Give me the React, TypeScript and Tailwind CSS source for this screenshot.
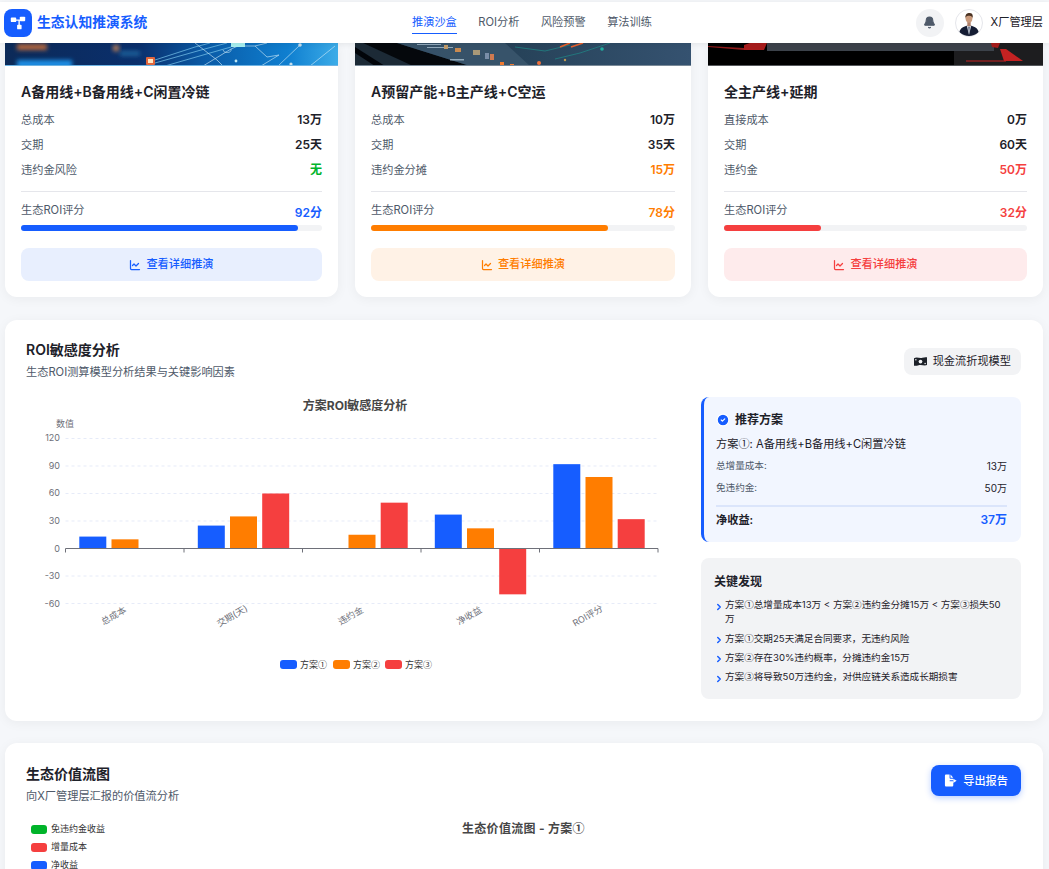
import { Bell, ChevronRight, CircleCheck, ChartLine } from "lucide-react";

const font = { fontFamily: 'Inter, "Noto Sans CJK SC", sans-serif' };

// Inter has its own wide circled digits, the reference uses the CJK ones
function circled(text: string) {
  return text.split(/([①②③])/).map((part, i) =>
    /[①②③]/.test(part) ? (
      <span key={i} className="font-['Noto_Sans_CJK_SC'] leading-none">{part}</span>
    ) : (
      part
    )
  );
}

const plans = [
  {
    title: "A备用线+B备用线+C闲置冷链",
    rows: [["总成本", "13万"], ["交期", "25天"], ["违约金风险", "无"]],
    score: 92,
    accent: "text-[#00b42a]",
    scoreText: "text-[#165dff]",
    bar: "bg-[#165dff]",
    btn: "bg-[#e8effe] text-[#165dff]",
    art: "blue",
  },
  {
    title: "A预留产能+B主产线+C空运",
    rows: [["总成本", "10万"], ["交期", "35天"], ["违约金分摊", "15万"]],
    score: 78,
    accent: "text-[#ff7d00]",
    scoreText: "text-[#ff7d00]",
    bar: "bg-[#ff7d00]",
    btn: "bg-[#fff2e6] text-[#ff7d00]",
    art: "slate",
  },
  {
    title: "全主产线+延期",
    rows: [["直接成本", "0万"], ["交期", "60天"], ["违约金", "50万"]],
    score: 32,
    accent: "text-[#f53f3f]",
    scoreText: "text-[#f53f3f]",
    bar: "bg-[#f53f3f]",
    btn: "bg-[#feebec] text-[#f53f3f]",
    art: "black",
  },
];

function CardArt({ kind }: { kind: string }) {
  if (kind === "blue") {
    return (
      <svg viewBox="0 0 333 23" preserveAspectRatio="none" className="block h-[23px] w-full">
        <defs>
          <linearGradient id="blueArt" x1="0" x2="1" y1="0" y2="0">
            <stop offset="0" stopColor="#0c2a58" />
            <stop offset="0.4" stopColor="#0a2f6c" />
            <stop offset="0.6" stopColor="#0a5aa6" />
            <stop offset="0.85" stopColor="#0f7fd0" />
            <stop offset="1" stopColor="#3cace8" />
          </linearGradient>
          <filter id="soft" x="-30%" y="-100%" width="160%" height="300%">
            <feGaussianBlur stdDeviation="2" />
          </filter>
        </defs>
        <rect width="333" height="23" fill="url(#blueArt)" />
        <rect x="12" y="1" width="30" height="6" fill="#b8683c" filter="url(#soft)" />
        <rect x="12" y="17" width="55" height="8" fill="#1a8ee4" filter="url(#soft)" />
        <rect x="115" y="8" width="20" height="5" fill="#1a5f98" filter="url(#soft)" />
        <circle cx="111" cy="5" r="3.5" fill="#b07a58" filter="url(#soft)" />
        <g stroke="#7cc8ee" strokeWidth="0.7" fill="none">
          <path d="M150 17 L190 4 L205 0" />
          <path d="M150 20 L196 7 L222 0" />
          <path d="M160 23 L205 10 L226 4" />
        </g>
        <g stroke="#cfeaf8" strokeWidth="0.7" fill="none" opacity="0.9">
          <path d="M190 0 L212 17 L218 23" />
          <path d="M198 23 L226 6 L240 0" />
          <path d="M250 3 L262 14 L274 12 L256 23" />
          <path d="M273 23 L295 2" />
          <path d="M232 3 L250 3 L262 0" />
          <path d="M305 23 L330 3" />
          <path d="M218 7 a4 3 0 1 0 8 -1" />
        </g>
        <rect x="226" y="0" width="14" height="4" fill="#a8f0f0" />
        <circle cx="295" cy="2" r="1.8" fill="#c4dcec" />
        <circle cx="286" cy="21" r="1.6" fill="#c4dcec" />
        <circle cx="231" cy="18" r="1.4" fill="#bfe8f4" />
        <rect x="141" y="14" width="9" height="8" rx="1" fill="#e0653c" />
        <rect x="143" y="16" width="5" height="4" fill="#ffe6c4" />
        <rect y="22" width="333" height="1" fill="#6fb4e4" />
      </svg>
    );
  }
  if (kind === "slate") {
    return (
      <svg viewBox="0 0 336 23" preserveAspectRatio="none" className="block h-[23px] w-full">
        <defs>
          <linearGradient id="slateArt" x1="0" x2="1" y1="0" y2="0">
            <stop offset="0" stopColor="#1f3446" />
            <stop offset="0.5" stopColor="#27435a" />
            <stop offset="1" stopColor="#355270" />
          </linearGradient>
        </defs>
        <rect width="336" height="23" fill="url(#slateArt)" />
        <path d="M0 0 L8 0 L60 23 L0 23 Z" fill="#1c2a36" />
        <path d="M8 0 L42 0 L115 23 L58 23 Z" fill="#05080c" />
        <path d="M0 4 L30 23 L20 23 L0 10 Z" fill="#02050a" />
        <path d="M42 0 L150 0 L175 23 L115 23 Z" fill="#3d5a70" opacity="0.75" />
        <g fill="#a9c0d0" opacity="0.8">
          <rect x="62" y="1" width="24" height="1" />
          <rect x="72" y="4" width="26" height="1" />
          <rect x="95" y="16" width="14" height="1.5" />
        </g>
        <g>
          <rect x="89" y="2" width="4" height="4" fill="#c09a68" />
          <rect x="100" y="5" width="6" height="4" fill="#c98a50" />
          <rect x="118" y="7" width="7" height="5" fill="#a89878" />
          <rect x="130" y="10" width="4" height="6" fill="#7a8ea8" />
          <rect x="135" y="11" width="4" height="6" fill="#d07a50" />
          <rect x="145" y="19" width="4" height="3" fill="#f07a30" />
          <rect x="155" y="21" width="4" height="2" fill="#f07a30" />
        </g>
        <g stroke="#1f8a88" strokeWidth="1" fill="none" opacity="0.7">
          <path d="M160 4 L190 8 L215 2" />
          <path d="M200 16 L225 10 L255 0" />
        </g>
        <path d="M205 4 L215 0 M216 4 L228 0" stroke="#e8602c" strokeWidth="1.6" />
        <circle cx="184" cy="20" r="2" fill="#f0703a" />
        <circle cx="247" cy="6" r="1.8" fill="#1fb0a0" />
        <circle cx="210" cy="17" r="1.2" fill="#c09a50" />
        <rect y="22" width="336" height="1" fill="#7a8a98" />
      </svg>
    );
  }
  return (
    <svg viewBox="0 0 335 23" preserveAspectRatio="none" className="block h-[23px] w-full">
      <rect width="335" height="23" fill="#000" />
      <rect x="59" y="0" width="227" height="8" fill="#3c424a" />
      <rect x="246" y="8" width="89" height="15" fill="#1d1d1f" />
      <rect x="286" y="0" width="49" height="8" fill="#1d1d1f" />
      <path d="M0 3 L36 5 L36 7 L0 4 Z" fill="#8e1a1a" />
      <path d="M36 2 L42 0 L59 0 L56 7 L36 7 Z" fill="#a81c1c" />
      <path d="M283 0 L292 0 L290 5 L284 4 Z" fill="#a81c1c" />
      <path d="M292 6 L298 6 L315 18 L296 18 Z" fill="#c42222" />
      <path d="M258 17.5 H298 V18.5 H258 Z" fill="#c42222" />
      <rect y="22" width="335" height="1" fill="#55585c" />
    </svg>
  );
}

function PlanCard({ plan }: { plan: (typeof plans)[number] }) {
  return (
    <div className="overflow-hidden rounded-b-xl bg-white shadow-[0_2px_12px_rgba(0,0,0,0.05)]">
      <CardArt kind={plan.art} />
      <div className="px-4 pt-4 pb-4">
        <h3 className="text-[14px] leading-5 font-semibold text-[#1d2129]">{plan.title}</h3>
        <div className="mt-[8px] flex flex-col gap-[5px]">
          {plan.rows.map(([k, v], i) => (
            <div key={k} className="flex h-5 items-center justify-between text-[11.2px]">
              <span className="text-[#4e5969]">{k}</span>
              <span className={`text-[12px] font-semibold ${i === 2 ? plan.accent : "text-[#1d2129]"}`}>{v}</span>
            </div>
          ))}
        </div>
        <div className="mt-[11px] border-t border-[#e5e6eb] pt-[10px]">
          <div className="flex items-start justify-between text-[11.2px] leading-4">
            <span className="text-[#4e5969]">生态ROI评分</span>
            <span className={`mt-[3px] text-[12px] font-semibold ${plan.scoreText}`}>{plan.score}分</span>
          </div>
          <div className="mt-[4px] h-[6px] rounded-full bg-[#f2f3f5]">
            <div className={`h-full rounded-full ${plan.bar}`} style={{ width: `${plan.score}%` }} />
          </div>
        </div>
        <div className={`mt-[17px] flex h-[33px] items-center justify-center gap-[5px] rounded-lg text-[11.2px] font-medium ${plan.btn}`}>
          <ChartLine size={12} strokeWidth={2.5} />
          <span>查看详细推演</span>
        </div>
      </div>
    </div>
  );
}

const series = [
  { color: "#165dff", values: [13, 25, 0, 37, 92], offset: 13.8 },
  { color: "#ff7d00", values: [10, 35, 15, 22, 78], offset: 46 },
  { color: "#f53f3f", values: [0, 60, 50, -50, 32], offset: 78.2 },
];
const cats = ["总成本", "交期(天)", "违约金", "净收益", "ROI评分"];
const ticks = [120, 90, 60, 30, 0, -30, -60];
// the svg sits at page x=26, y=395
const zero = 153.5;
const unit = 0.9167;
const x0 = 39.5;
const band = 118.5;

function RoiChart() {
  return (
    <svg width="654" height="285" viewBox="0 0 654 285" className="block" style={font}>
      <text x="329" y="15" textAnchor="middle" fontSize="12" fontWeight="700" fill="#464646">方案ROI敏感度分析</text>
      <text x="39" y="32" textAnchor="middle" fontSize="9" fill="#6e7079">数值</text>
      {ticks.map((t) => {
        const y = zero - t * unit;
        return (
          <g key={t}>
            {t !== 0 && <line x1={x0} x2={x0 + band * 5} y1={y} y2={y} stroke="#e6ebf8" strokeDasharray="3 3" />}
            <text x="34" y={y + 3} textAnchor="end" fontSize="9" fill="#6e7079">{t}</text>
          </g>
        );
      })}
      {series.map((s) =>
        s.values.map((v, i) => {
          if (v === 0) return null;
          const h = Math.abs(v) * unit;
          return <rect key={s.color + i} x={x0 + band * i + s.offset} y={v > 0 ? zero - h : zero} width="27" height={h} fill={s.color} />;
        })
      )}
      <line x1={x0} x2={x0 + band * 5} y1={zero} y2={zero} stroke="#6e7079" />
      {[0, 1, 2, 3, 4, 5].map((i) => (
        <line key={i} x1={x0 + band * i} x2={x0 + band * i} y1={zero} y2={zero + 4} stroke="#6e7079" />
      ))}
      {cats.map((c, i) => {
        const cx = x0 + band * i + band / 2 - 11;
        return (
          <text key={c} x={cx} y="224" textAnchor="middle" fontSize="9" fill="#6e7079" transform={`rotate(-30 ${cx} 221)`}>{c}</text>
        );
      })}
      {[
        [254, "#165dff", "方案①"],
        [307, "#ff7d00", "方案②"],
        [359, "#f53f3f", "方案③"],
      ].map(([x, color, label]) => (
        <g key={label as string}>
          <rect x={x as number} y="265" width="17" height="9" rx="3" fill={color as string} />
          <text x={(x as number) + 20} y="273" fontSize="9" fill="#333" fontFamily='"Noto Sans CJK SC", sans-serif'>{label}</text>
        </g>
      ))}
    </svg>
  );
}

function Avatar() {
  return (
    <svg viewBox="0 0 28 28" className="h-[28px] w-[28px] rounded-full border border-[#e5e6eb] bg-white">
      <path d="M3 28 C3 20 7 18 14 16.5 C21 18 25 20 25 28 Z" fill="#141c33" />
      <path d="M11.6 17 L14 27 L16.4 17 Z" fill="#d8dde6" />
      <path d="M13.3 18 L14 26 L14.7 18 Z" fill="#3a4660" />
      <rect x="12.2" y="12" width="3.6" height="5.5" fill="#b0806a" />
      <ellipse cx="14" cy="9" rx="3.7" ry="4.6" fill="#c99a7c" />
      <path d="M10.2 8.5 C9.6 4 13 2.8 15 3.2 C18 3.4 18.4 6 17.9 8.5 C17.2 6.4 15 6.2 13 6.2 C12 6.2 10.8 7 10.2 8.5 Z" fill="#4a3222" />
    </svg>
  );
}

function Logo() {
  return (
    <div className="flex h-7 w-7 items-center justify-center rounded-lg bg-[#165dff]">
      <svg viewBox="0 0 20 20" className="h-[18px] w-[18px]" fill="#fff">
        <rect x="2" y="4" width="6" height="5" rx="1" />
        <rect x="12" y="3" width="6" height="5" rx="1" />
        <rect x="9" y="12" width="5" height="5" rx="1" />
        <path d="M7 6 H13 V7.4 H7 Z M10.5 7 H12 V13 H10.5 Z" />
      </svg>
    </div>
  );
}

function MoneyIcon() {
  return (
    <svg viewBox="0 0 14 11" className="h-[11px] w-[13px]">
      <path d="M0 2 C3 0 6 2.4 9 1.4 C11 0.8 12.6 0.6 14 1 V9.4 C11 10.6 8 8.6 5 9.6 C3 10.2 1.4 10.4 0 10 Z" fill="#1d2129" />
      <circle cx="7" cy="5.6" r="2" fill="#f2f3f5" />
      <circle cx="2" cy="3.6" r="0.8" fill="#f2f3f5" />
      <circle cx="12" cy="7.6" r="0.8" fill="#f2f3f5" />
    </svg>
  );
}

function ExportIcon() {
  return (
    <svg viewBox="0 0 14 14" className="h-[13px] w-[13px]" fill="#fff">
      <path d="M1 2 C1 1.2 1.6 0.6 2.4 0.6 H6 V4 C6 4.6 6.4 5 7 5 H10 V6.6 H6.6 C6.2 6.6 6 6.9 6 7.2 C6 7.6 6.2 7.8 6.6 7.8 H10 V12 C10 12.8 9.4 13.4 8.6 13.4 H2.4 C1.6 13.4 1 12.8 1 12 Z" />
      <path d="M7 0.6 L10 4 H7 Z" />
      <path d="M10 5 L13.6 7.2 L10 9.6 Z" />
    </svg>
  );
}

export default function App() {
  return (
    <div className="h-[869px] overflow-hidden bg-[#f5f7fa] pt-[2px]" style={font}>
      <header className="relative z-10 flex h-[41px] items-center bg-white pr-[6px] pl-1 shadow-[0_1px_6px_rgba(0,0,0,0.08)]">
        <div className="flex w-[300px] items-center gap-[5px]">
          <Logo />
          <span className="text-[13.8px] font-semibold text-[#165dff]">生态认知推演系统</span>
        </div>
        <nav className="ml-[108px] flex items-center gap-[21.5px] text-[11.2px] text-[#4e5969]">
          <span className="border-b border-[#165dff] pt-[3px] pb-[3px] text-[#165dff]">推演沙盒</span>
          <span>ROI分析</span>
          <span>风险预警</span>
          <span>算法训练</span>
        </nav>
        <div className="ml-auto flex items-center">
          <div className="flex h-7 w-7 items-center justify-center rounded-full bg-[#f2f3f5] text-[#4e5969]">
            <Bell size={13} fill="currentColor" />
          </div>
          <div className="ml-[11px]"><Avatar /></div>
          <span className="ml-2 text-[11.2px] text-[#1d2129]">X厂管理层</span>
        </div>
      </header>

      <main className="pr-[6px] pl-[5px]">
        <div className="grid grid-cols-[333px_336px_335px] gap-[17px]">
          {plans.map((p) => (
            <PlanCard key={p.title} plan={p} />
          ))}
        </div>

        <section className="mt-[23px] rounded-xl bg-white pt-[20px] pr-[22px] pb-[22px] pl-[21px] shadow-[0_2px_12px_rgba(0,0,0,0.05)]">
          <div className="flex items-start justify-between">
            <div>
              <h2 className="text-[14px] leading-5 font-semibold text-[#1d2129]">ROI敏感度分析</h2>
              <p className="mt-[4px] text-[11.2px] leading-4 text-[#4e5969]">生态ROI测算模型分析结果与关键影响因素</p>
            </div>
            <div className="mt-[8px] flex h-[27px] items-center gap-[6px] rounded-lg bg-[#f2f3f5] px-[10px] text-[11.2px] text-[#1d2129]">
              <MoneyIcon />
              <span>现金流折现模型</span>
            </div>
          </div>
          <div className="mt-[15px] flex justify-between">
            <RoiChart />
            <div className="mt-[2px] w-[320px]">
              <div className="rounded-lg border-l-[3px] border-[#165dff] bg-[#f2f6ff] pt-[14px] pr-[14px] pb-[13px] pl-[12px]">
                <div className="flex items-center gap-[5px] text-[12px] font-semibold text-[#1d2129]">
                  <CircleCheck size={14} fill="#165dff" stroke="#fff" />
                  <span>推荐方案</span>
                </div>
                <p className="mt-[7px] text-[11.2px] leading-4 text-[#1d2129]">{circled("方案①: A备用线+B备用线+C闲置冷链")}</p>
                <div className="mt-[3px] flex h-[22px] items-center justify-between text-[9.6px]">
                  <span className="text-[#4e5969]">总增量成本:</span>
                  <span className="text-[10px] text-[#1d2129]">13万</span>
                </div>
                <div className="flex h-[22px] items-center justify-between text-[9.6px]">
                  <span className="text-[#4e5969]">免违约金:</span>
                  <span className="text-[10px] text-[#1d2129]">50万</span>
                </div>
                <div className="mt-[6px] flex items-center justify-between border-t-2 border-[#dbe5fb] pt-[4px] text-[11.2px] font-semibold">
                  <span className="text-[#1d2129]">净收益:</span>
                  <span className="text-[12px] text-[#165dff]">37万</span>
                </div>
              </div>
              <div className="mt-[16px] rounded-lg bg-[#f2f3f5] px-[13px] pt-[16px] pb-[15px]">
                <h4 className="text-[12px] leading-4 font-semibold text-[#1d2129]">关键发现</h4>
                <ul className="mt-[8px] flex flex-col gap-[4.8px] text-[9.6px] leading-[14.4px] text-[#1d2129]">
                  {[
                    "方案①总增量成本13万 < 方案②违约金分摊15万 < 方案③损失50万",
                    "方案①交期25天满足合同要求，无违约风险",
                    "方案②存在30%违约概率，分摊违约金15万",
                    "方案③将导致50万违约金，对供应链关系造成长期损害",
                  ].map((t) => (
                    <li key={t} className="flex gap-[1px]">
                      <ChevronRight size={10} strokeWidth={3.5} className="mt-[3.5px] shrink-0 text-[#165dff]" />
                      <span>{circled(t)}</span>
                    </li>
                  ))}
                </ul>
              </div>
            </div>
          </div>
        </section>

        <section className="mt-[22px] rounded-t-xl bg-white pt-[21px] pr-[22px] pb-6 pl-[21px] shadow-[0_2px_12px_rgba(0,0,0,0.05)]">
          <div className="flex items-start justify-between">
            <div>
              <h2 className="text-[14px] leading-5 font-semibold text-[#1d2129]">生态价值流图</h2>
              <p className="mt-[4px] text-[11.2px] leading-4 text-[#4e5969]">向X厂管理层汇报的价值流分析</p>
            </div>
            <div className="mt-[1px] flex h-[31px] items-center gap-[6px] rounded-lg bg-[#165dff] px-[13px] text-[11.2px] font-medium text-white shadow-[0_2px_6px_rgba(22,93,255,0.3)]">
              <ExportIcon />
              <span>导出报告</span>
            </div>
          </div>
          <div className="relative mt-[19px]">
            <div className="flex flex-col gap-[6px] pl-[5px] text-[9px] leading-3 text-[#333]">
              {[
                ["bg-[#00b42a]", "免违约金收益"],
                ["bg-[#f53f3f]", "增量成本"],
                ["bg-[#165dff]", "净收益"],
              ].map(([c, t]) => (
                <div key={t} className="flex items-center gap-1">
                  <span className={`h-[9px] w-4 rounded-[3px] ${c}`} />
                  <span>{t}</span>
                </div>
              ))}
            </div>
            <div className="absolute -top-[3px] left-[436px] text-[12px] font-bold tracking-[0.3px] text-[#464646]">{circled("生态价值流图 - 方案①")}</div>
          </div>
        </section>
      </main>
    </div>
  );
}
